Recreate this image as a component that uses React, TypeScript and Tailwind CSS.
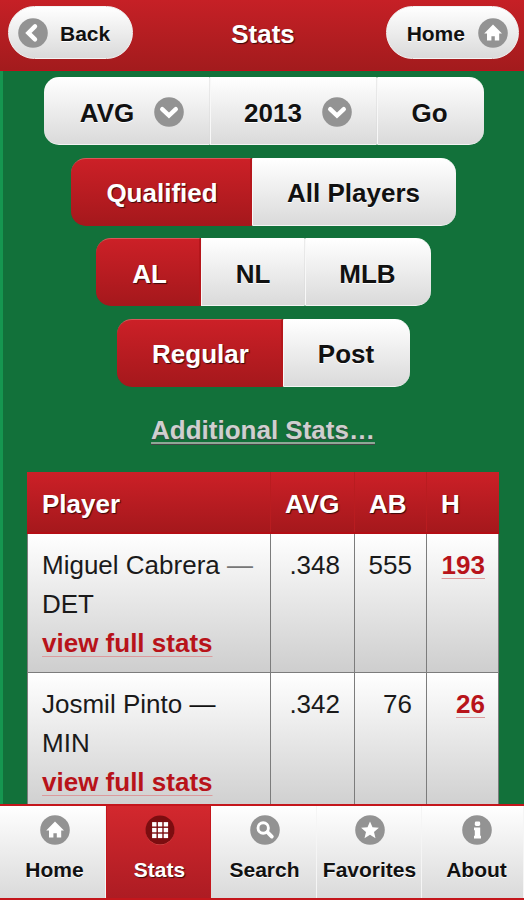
import React from "react";

type IconName = "left" | "down" | "home" | "grid" | "search" | "star" | "info";

function Icon({ name, active = false }: { name: IconName; active?: boolean }) {
  return (
    <svg viewBox="0 0 30 30" className="block h-[30px] w-[30px] shrink-0">
      {active && <circle cx="15" cy="15.8" r="14.2" fill="#e8605c" />}
      <circle cx="15" cy="15" r={active ? 14.5 : 14.8} fill={active ? "#7c0d10" : "#939393"} />
      {name === "left" && (
        <path d="M17 8.4 10.4 14.9l6.6 6.5" fill="none" stroke="#fff" strokeWidth="4.4" strokeLinecap="round" />
      )}
      {name === "down" && (
        <path d="M8.2 12.2l6.8 6.4 6.8-6.4" fill="none" stroke="#fff" strokeWidth="4.4" strokeLinecap="round" />
      )}
      {name === "home" && (
        <path d="M15 6.6 24 15.4h-2.8v7.2h-4.4v-4.4h-3.4v4.4H9v-7.2H6.2z" fill="#fff" />
      )}
      {name === "grid" &&
        [7.1, 12.9, 18.7].map((y) =>
          [7.1, 12.9, 18.7].map((x) => <rect key={`${x}-${y}`} x={x} y={y} width="4.4" height="4.4" fill="#fff" />),
        )}
      {name === "search" && (
        <>
          <circle cx="13.2" cy="13" r="5.2" fill="none" stroke="#fff" strokeWidth="2.9" />
          <path d="M17.4 17.2l4.4 4.4" stroke="#fff" strokeWidth="3.8" strokeLinecap="round" />
        </>
      )}
      {name === "star" && (
        <path d="M15 6.4l2.5 5.9 6.4.5-4.9 4.2 1.5 6.2-5.5-3.4-5.5 3.4 1.5-6.2-4.9-4.2 6.4-.5z" fill="#fff" />
      )}
      {name === "info" && (
        <>
          <rect x="12.8" y="6.6" width="5.4" height="4.4" rx="1.4" fill="#fff" />
          <path d="M12 12.4h6.2v8.4h.8v2.8h-7v-2.8h.8v-5.6h-.8z" fill="#fff" />
        </>
      )}
    </svg>
  );
}

const LIGHT =
  "bg-linear-to-b from-white to-[#dadada] text-[#111] [text-shadow:0_1px_0_#fff]";
const RED =
  "bg-linear-to-b from-[#cc2027] to-[#a5181c] text-white [text-shadow:1px_1px_1px_#3a0a0a]";

type Segment = { label: string; width: string; active?: boolean; select?: boolean; pad?: string };

function ButtonGroup({ items }: { items: Segment[] }) {
  return (
    <div className="mb-[12.5px] flex h-[68px]">
      {items.map((s, i) => (
        <button
          key={s.label}
          className={[
            "flex items-center justify-center border-y pt-[3px] text-[26px] leading-none font-bold whitespace-nowrap",
            s.width,
            s.pad ?? "",
            s.active
              ? RED + " border-t-[#d9575a] border-b-[#a5181c] border-r-2 border-r-[#b5161b]"
              : LIGHT + " border-t-white border-b-[#f4f4f4]",
            !s.active && i > 0 ? "border-l border-l-[#f8f8f8]" : "",
            !s.active && i < items.length - 1 ? "border-r border-r-[#d9d9d9]/50" : "",
            i === 0 ? "rounded-l-[15px]" : "",
            i === items.length - 1 ? "rounded-r-[15px]" : "",
          ].join(" ")}
        >
          <span>{s.label}</span>
          {s.select && (
            <span className="-mt-[2px] ml-[20px]">
              <Icon name="down" />
            </span>
          )}
        </button>
      ))}
    </div>
  );
}

const rows = [
  { name: "Miguel Cabrera", team: "DET", avg: ".348", ab: "555", h: "193", dash: "text-[#777]" },
  { name: "Josmil Pinto", team: "MIN", avg: ".342", ab: "76", h: "26", dash: "text-[#111]" },
];

const COLS = "grid grid-cols-[244px_84px_72px_72px]";
const ROW_COLS = "grid grid-cols-[243px_84px_72px_72px]";
const HEAD = "border-r border-r-[#b91c20] pt-[13px] last:border-r-0";
const CELL = "border-r border-[#7c7c7c] pt-[12px] pr-[14px] text-right last:pr-[13px]";
const LINK =
  "font-bold text-[#b8131a] underline decoration-[#dc9a9c] decoration-1 underline-offset-[4px]";

const tabs: { label: string; icon: IconName; width: string }[] = [
  { label: "Home", icon: "home", width: "w-[106px] pl-[4px]" },
  { label: "Stats", icon: "grid", width: "w-[105px] pl-[2px]" },
  { label: "Search", icon: "search", width: "w-[106px] pl-[2px]" },
  { label: "Favorites", icon: "star", width: "w-[105px] pl-[1px]" },
  { label: "About", icon: "info", width: "w-[102px] pl-[8px]" },
];

export default function App() {
  return (
    <div className="flex h-[900px] w-[524px] flex-col overflow-hidden bg-[#12713a] font-['Liberation_Sans',Arial,sans-serif]">
      <header className="flex h-[71px] shrink-0 items-start justify-between border-b border-[#c00d1a] bg-linear-to-b from-[#c62026] to-[#a31b1d] pt-[6px] pr-[5px] pl-[8px]">
        <button className={`flex h-[53px] w-[125px] items-center rounded-full border border-[#f3f3f3] pl-[9px] text-[21px] font-bold ${LIGHT}`}>
          <Icon name="left" />
          <span className="ml-[12px] pt-[2px]">Back</span>
        </button>
        <h1 className="mt-[10px] ml-[7px] text-[26px] leading-[36px] font-bold text-white [text-shadow:1px_1px_1px_#3a0a0a]">Stats</h1>
        <button className={`flex h-[53px] w-[133px] items-center justify-end rounded-full border border-[#f3f3f3] pr-[10px] text-[21px] font-bold ${LIGHT}`}>
          <span className="mr-[13px] pt-[2px]">Home</span>
          <Icon name="home" />
        </button>
      </header>

      <main className="flex min-h-0 flex-1 flex-col items-center overflow-hidden border-l-[3px] border-[#169650] pt-[6px]">
        <div className="flex shrink-0 flex-col items-center">
          <ButtonGroup
            items={[
              { label: "AVG", width: "w-[166px]", select: true, pad: "pl-[12px]" },
              { label: "2013", width: "w-[167px]", select: true, pad: "pl-[10px]" },
              { label: "Go", width: "w-[107px]", pad: "pr-[2px]" },
            ]}
          />
          <ButtonGroup
            items={[
              { label: "Qualified", width: "w-[181px]", active: true, pad: "pl-[3px]" },
              { label: "All Players", width: "w-[204px]", pad: "pr-[2px]" },
            ]}
          />
          <ButtonGroup
            items={[
              { label: "AL", width: "w-[105px]", active: true, pad: "pl-[4px]" },
              { label: "NL", width: "w-[104px]" },
              { label: "MLB", width: "w-[126px]", pad: "pr-[2px]" },
            ]}
          />
          <ButtonGroup
            items={[
              { label: "Regular", width: "w-[166px]", active: true, pad: "pl-[3px]" },
              { label: "Post", width: "w-[127px]", pad: "pr-[2px]" },
            ]}
          />
        </div>

        <a className="mt-[13px] mr-[1px] block h-[60px] shrink-0 text-[26px] leading-[36px] font-bold text-[#cfcfcf] underline decoration-[#8fa897] decoration-2 underline-offset-[3px] [text-shadow:0_1px_1px_#444]">
          Additional Stats…
        </a>

        <section className="mr-[1px] w-[472px] shrink-0 text-[26px] leading-[39px]">
          <div className={`${COLS} ${RED} h-[62px] border-b-2 border-[#b40e15] font-bold`}>
            <div className={`${HEAD} pl-[15px]`}>Player</div>
            <div className={`${HEAD} pl-[14px]`}>AVG</div>
            <div className={`${HEAD} pl-[14px]`}>AB</div>
            <div className={`${HEAD} pl-[14px]`}>H</div>
          </div>
          {rows.map((r) => (
            <div
              key={r.name}
              className={`${ROW_COLS} h-[139px] border-b border-l border-[#7c7c7c] bg-linear-to-b from-white to-[#cecece] text-[#1a1a1a]`}
            >
              <div className="border-r border-[#7c7c7c] pt-[12px] pl-[14px]">
                {r.name} <span className={r.dash}>—</span>
                <br />
                {r.team}
                <br />
                <a className={LINK}>view full stats</a>
              </div>
              <div className={CELL}>{r.avg}</div>
              <div className={CELL}>{r.ab}</div>
              <div className={CELL}>
                <a className={LINK}>{r.h}</a>
              </div>
            </div>
          ))}
        </section>
      </main>

      <nav className="flex h-[96px] shrink-0 border-t-2 border-b-2 border-[#c4161c]">
        {tabs.map((t) => {
          const active = t.label === "Stats";
          return (
            <button
              key={t.label}
              className={`flex flex-col items-center pt-[9px] text-[21px] font-bold whitespace-nowrap ${t.width} ${
                active
                  ? "border-r border-l border-[#c4161c] bg-linear-to-b from-[#d3282e] to-[#ad1c23] text-white [text-shadow:1px_1px_1px_#3a0a0a]"
                  : `border-r border-[#f5f5f5] ${LIGHT}`
              }`}
            >
              <Icon name={t.icon} active={active} />
              <span className="mt-[11px] leading-[28px]">{t.label}</span>
            </button>
          );
        })}
      </nav>
    </div>
  );
}
